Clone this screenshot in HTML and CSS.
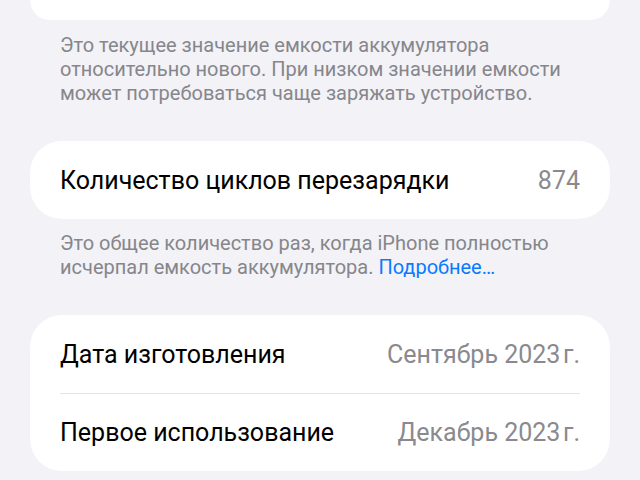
FILE: index.html
```html
<!DOCTYPE html>
<html lang="ru">
<head>
    <meta charset="UTF-8">
    <meta name="viewport" content="width=device-width, initial-scale=1.0">
    <title>Состояние аккумулятора</title>
    <link rel="stylesheet" href="styles.css">
</head>
<body>

    <div class="page">

        <div class="card card_top"></div>

        <div class="note">
            Это текущее значение емкости аккумулятора<br>
            относительно нового. При низком значении емкости<br>
            может потребоваться чаще заряжать устройство.
        </div>

        <div class="card">
            <div class="row">
                <span class="label">Количество циклов перезарядки</span>
                <span class="value">874</span>
            </div>
        </div>

        <div class="note">
            Это общее количество раз, когда iPhone полностью<br>
            исчерпал емкость аккумулятора. <a class="link" href="#">Подробнее…</a>
        </div>

        <div class="card">
            <div class="row">
                <span class="label">Дата изготовления</span>
                <span class="value">Сентябрь 2023&#8202;г.</span>
            </div>
            <div class="row row_line">
                <span class="label">Первое использование</span>
                <span class="value">Декабрь 2023&#8202;г.</span>
            </div>
        </div>

    </div>

</body>
</html>
```

FILE: styles.css
```css
body{
    margin: 0;
    background-color: #f2f2f7;
    font-family: Roboto, "Noto Sans", sans-serif;
}

.page{
    padding: 0 30px;
}

.card{
    background-color: white;
    border-radius: 32px;
    margin-bottom: 12px;
}

/* only the bottom of this card is left on screen */
.card_top{
    height: 20px;
    border-radius: 0 0 30px 30px;
    margin-bottom: 13px;
}

.note{
    padding: 0 30px;
    font-size: 20px;
    line-height: 24px;
    color: #86868b;
    margin-bottom: 36px;
    white-space: nowrap;
}

.link{
    color: #0a7aff;
    text-decoration: none;
}

.row{
    height: 78px;
    margin: 0 30px;
    display: flex;
    align-items: center;
    justify-content: space-between;
    font-size: 25px;
}

.row_line{
    border-top: 1px solid #e3e3e8;
    height: 77px;
}

.label{
    color: black;
}

.value{
    color: #8a8a8e;
}
```
